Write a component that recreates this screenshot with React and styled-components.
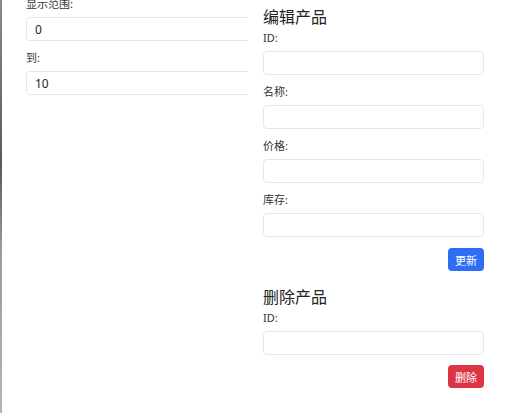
import styled, { createGlobalStyle } from "styled-components";

const font = `"Noto Sans", "Noto Sans CJK SC", sans-serif`;

const GlobalStyle = createGlobalStyle`
  html, body {
    margin: 0;
    padding: 0;
    background: #fff;
    overflow: hidden;
  }
  body {
    font-family: ${font};
    color: #212529;
  }
`;

const Page = styled.div`
  display: flex;
  align-items: flex-start;
  width: 508px;
  height: 413px;
  overflow: hidden;
`;

const EdgeStrip = styled.div`
  width: 2px;
  align-self: stretch;
  background: linear-gradient(#8a8a8a, #5a5a5a 40%, #9a9a9a 60%, #b5b5b5);
  margin-right: 24px;
`;

const Column = styled.div`
  display: flex;
  flex-direction: column;
  width: ${(p) => p.$width}px;
  margin-top: ${(p) => p.$top}px;
  margin-right: ${(p) => p.$gap || 0}px;
  overflow: hidden;
`;

const Heading = styled.h3`
  margin: 0 0 3px;
  font-family: ${font};
  font-size: 16px;
  line-height: 20px;
  font-weight: 400;
  color: #222;
`;

const Field = styled.div`
  display: flex;
  flex-direction: column;
  margin-bottom: 9px;
`;

const Label = styled.label`
  font-family: ${font};
  font-size: 11px;
  line-height: 16px;
  margin-bottom: 5px;
  color: #333;
`;

const Input = styled.input`
  box-sizing: border-box;
  width: ${(p) => p.$width || 221}px;
  height: 24px;
  padding: 0 8px;
  border: 1px solid #e6e7e9;
  border-radius: 4px;
  font-family: ${font};
  font-size: 12px;
  color: #212529;
  background: #fff;
  outline: none;
`;

const Actions = styled.div`
  display: flex;
  justify-content: flex-end;
  margin-top: ${(p) => p.$top}px;
`;

const Button = styled.button`
  width: 36px;
  height: 23px;
  padding: 0;
  border: none;
  border-radius: 4px;
  font-family: ${font};
  font-size: 11px;
  color: #fff;
  background: ${(p) => (p.$danger ? "#dc3545" : "#2f6df6")};
  cursor: pointer;
`;

const Section = styled.div`
  display: flex;
  flex-direction: column;
  margin-bottom: ${(p) => p.$bottom || 0}px;
`;

export default function App() {
  return (
    <>
      <GlobalStyle />
      <Page>
        <EdgeStrip />
        <Column $width={222} $top={-4} $gap={15}>
          <Field>
            <Label>显示范围:</Label>
            <Input $width={240} defaultValue="0" />
          </Field>
          <Field>
            <Label>到:</Label>
            <Input $width={240} defaultValue="10" />
          </Field>
        </Column>
        <Column $width={221} $top={7}>
          <Section $bottom={16}>
            <Heading>编辑产品</Heading>
            <Field>
              <Label>ID:</Label>
              <Input />
            </Field>
            <Field>
              <Label>名称:</Label>
              <Input />
            </Field>
            <Field>
              <Label>价格:</Label>
              <Input />
            </Field>
            <Field>
              <Label>库存:</Label>
              <Input />
            </Field>
            <Actions $top={2}>
              <Button>更新</Button>
            </Actions>
          </Section>
          <Section>
            <Heading>删除产品</Heading>
            <Field>
              <Label>ID:</Label>
              <Input />
            </Field>
            <Actions $top={1}>
              <Button $danger>删除</Button>
            </Actions>
          </Section>
        </Column>
      </Page>
    </>
  );
}
